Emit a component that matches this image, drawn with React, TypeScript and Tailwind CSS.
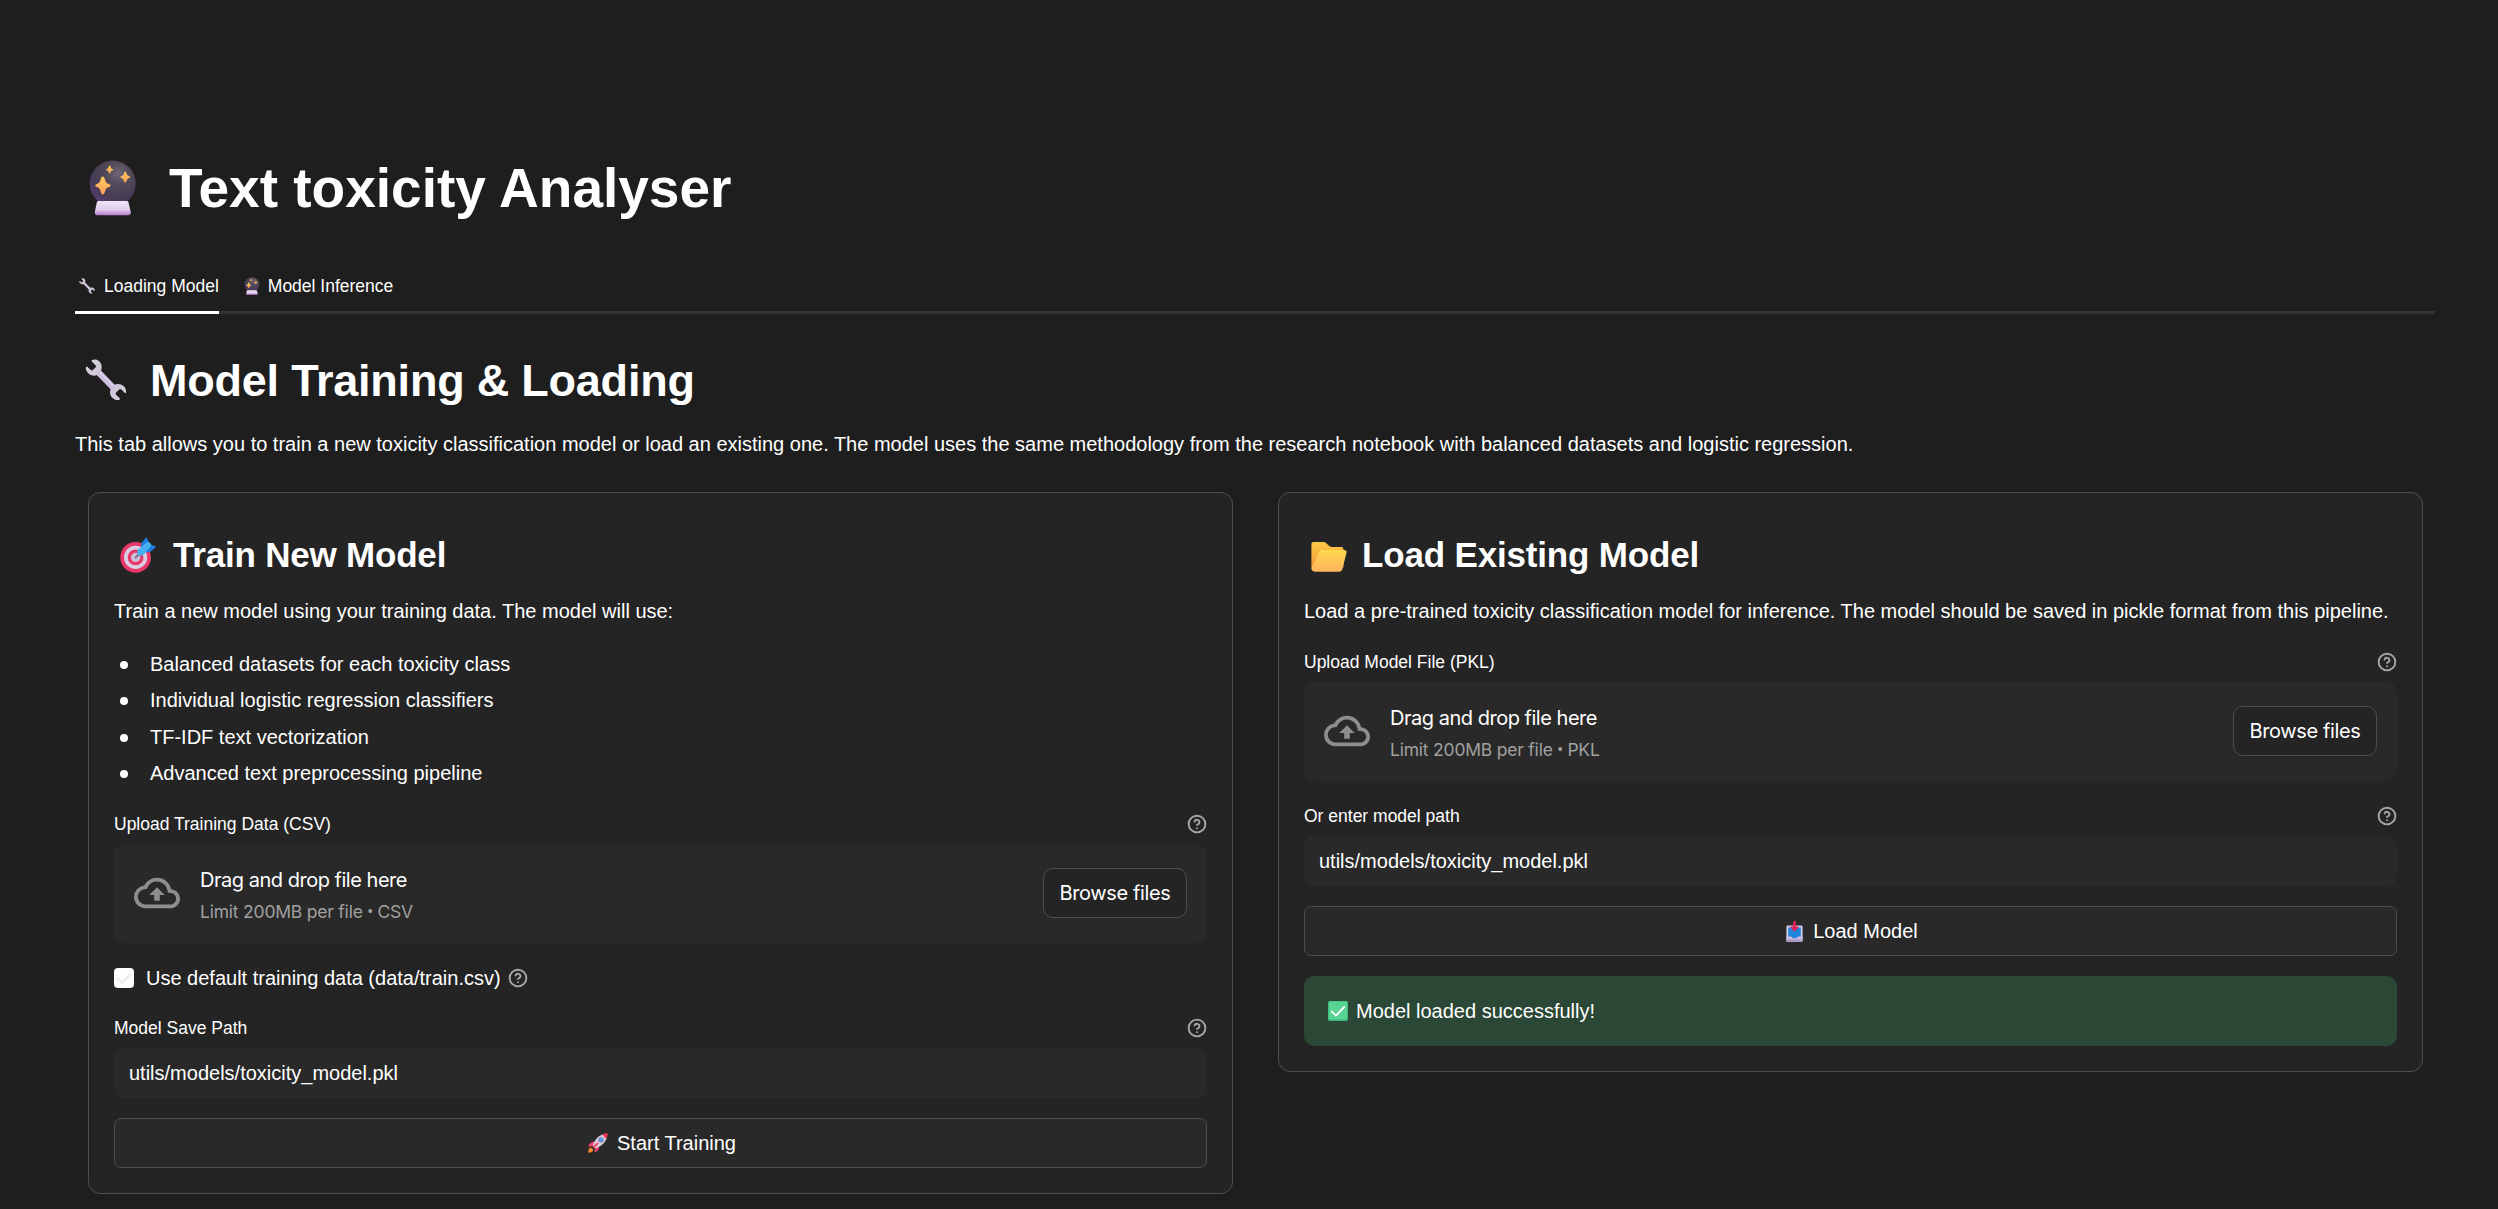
import type { ReactNode } from "react";

type IconProps = { className?: string };

function CrystalBall({ className = "", id }: IconProps & { id: string }) {
  return (
    <svg viewBox="0 0 48 56" className={`shrink-0 ${className}`} aria-hidden="true">
      <defs>
        <radialGradient id={`${id}-ball`} cx="0.62" cy="0.28" r="0.85">
          <stop offset="0" stopColor="#6f6678" />
          <stop offset="0.3" stopColor="#514a58" />
          <stop offset="0.65" stopColor="#463b55" />
          <stop offset="1" stopColor="#5d3a85" />
        </radialGradient>
        <linearGradient id={`${id}-base`} x1="0" y1="0" x2="0" y2="1">
          <stop offset="0" stopColor="#efe6f6" />
          <stop offset="0.6" stopColor="#dfcdec" />
          <stop offset="1" stopColor="#b77bd0" />
        </linearGradient>
        <linearGradient id={`${id}-star`} x1="0" y1="0" x2="0" y2="1">
          <stop offset="0" stopColor="#ffc95c" />
          <stop offset="1" stopColor="#ff9d5c" />
        </linearGradient>
      </defs>
      <circle cx="23.7" cy="23.5" r="23" fill={`url(#${id}-ball)`} />
      <path d="M9.5 41H37.8C38.6 41 39.3 41.6 39.5 42.4L41.8 52C42.2 53.8 41 55.2 39.2 55.2H8.4C6.6 55.2 5.4 53.8 5.8 52L7.8 42.4C8 41.6 8.7 41 9.5 41Z" fill={`url(#${id}-base)`} />
      <g fill={`url(#${id}-star)`}>
        <path d="M13.8 16.5Q15.2 16.5 15.7 18.6C16.6 22.6 17.6 23.4 20.2 24.1Q21.6 24.6 21.6 25.6Q21.6 26.6 20.2 27.1C17.6 27.8 16.6 28.8 15.7 32.6Q15.2 34.6 13.8 34.6Q12.4 34.6 11.9 32.6C11 28.8 10 27.8 7.6 27.1Q6.2 26.6 6.2 25.6Q6.2 24.6 7.6 24.1C10 23.4 11 22.6 11.9 18.6Q12.4 16.5 13.8 16.5Z" />
        <path d="M36.2 11.5Q37 11.5 37.5 13.2C38 15.1 38.5 15.6 40 16Q41.2 16.5 41.2 17.2Q41.2 17.9 40 18.3C38.5 18.7 38 19.3 37.5 21.1Q37 22.8 36.2 22.8Q35.4 22.8 34.9 21.1C34.4 19.3 33.8 18.7 32.5 18.3Q31.3 17.9 31.3 17.2Q31.3 16.5 32.5 16C33.8 15.6 34.4 15.1 34.9 13.2Q35.4 11.5 36.2 11.5Z" />
        <path d="M20.6 5.6Q21.2 5.6 21.6 7C22 8.3 22.3 8.6 23.3 8.9Q24.2 9.2 24.2 9.7Q24.2 10.2 23.3 10.5C22.3 10.8 22 11.1 21.6 12.4Q21.2 13.8 20.6 13.8Q20 13.8 19.6 12.4C19.2 11.1 18.9 10.8 17.9 10.5Q17 10.2 17 9.7Q17 9.2 17.9 8.9C18.9 8.6 19.2 8.3 19.6 7Q20 5.6 20.6 5.6Z" />
      </g>
    </svg>
  );
}

function Wrench({ className = "", id }: IconProps & { id: string }) {
  return (
    <svg viewBox="0 0 42 42" className={`shrink-0 ${className}`} aria-hidden="true">
      <defs>
        <linearGradient id={`${id}-metal`} x1="0" y1="0" x2="1" y2="1">
          <stop offset="0" stopColor="#d9d3df" />
          <stop offset="0.3" stopColor="#cfc8d6" />
          <stop offset="0.5" stopColor="#cdbbe3" />
          <stop offset="0.8" stopColor="#d0c8d9" />
          <stop offset="1" stopColor="#e0dbe5" />
        </linearGradient>
      </defs>
      <path
        d="M7.2 1.1C11.4 -0.6 16 2.1 16.6 6.9C16.8 8.4 16.6 10.2 16 11.6L29.4 25.6C31.6 24.7 34.4 24.7 36.7 25.8C39.8 27.2 41.4 30.2 41.1 33.4C41 34.2 40.3 34.4 39.7 33.8L36.3 30.6C35.6 30 34.7 30 34.1 30.6L31.1 33.6C30.5 34.3 30.5 35.1 31.1 35.7L34.5 39.1C35.1 39.8 34.8 40.7 34 40.9C30.3 41.5 26.6 39.3 25.4 35.7C24.8 33.9 24.9 31.9 25.6 30.2L11.9 16.2C8.8 17.2 5.3 16.5 3 14C1.2 12.1 0.5 9.8 0.9 8.3C1.1 7.5 1.9 7.3 2.5 7.9L5.8 11.1C6.4 11.7 7.3 11.7 7.9 11.1L10.5 8.5C11.1 7.9 11.1 7 10.5 6.3L7 2.7C6.5 2.1 6.5 1.4 7.2 1.1Z"
        fill={`url(#${id}-metal)`}
      />
      <path d="M15.5 13.5L28 26.5" stroke="#e3d6f2" strokeWidth="1.6" strokeLinecap="round" opacity="0.7" />
    </svg>
  );
}

function Target({ className = "" }: IconProps) {
  return (
    <svg viewBox="0 0 36 36" className={`shrink-0 ${className}`} aria-hidden="true">
      <circle cx="15.6" cy="20.4" r="15.3" fill="#e8396a" />
      <circle cx="15.6" cy="20.4" r="11.6" fill="#d9cfe4" />
      <circle cx="15.6" cy="20.4" r="7.9" fill="#e8396a" />
      <circle cx="15.6" cy="20.4" r="4.6" fill="#cdc1da" />
      <path d="M15.6 20.6L20 16" stroke="#7b6f8c" strokeWidth="2" strokeLinecap="round" />
      <path d="M21 9.6L21.6 6.4C21.7 5.7 21.9 5.3 22.4 4.8L25.8 0.9C26.3 0.3 26.9 0.5 27.1 1.2L28.5 5.6L22.3 13.2Z" fill="#1e7fe0" />
      <path d="M23.4 14.2L30.3 7.6L35 9.1C35.7 9.3 35.9 9.9 35.3 10.4L31.4 14C31 14.4 30.6 14.6 30 14.7L27 15.6Z" fill="#1e7fe0" />
      <path d="M18.4 12.6L26.6 5.4C27.4 4.6 28.6 4.6 29.6 5.4L30.6 6.4C31.4 7.3 31.4 8.5 30.6 9.4L23.8 17.4C22.6 18.9 20.2 19.4 18.4 18C16.5 16.5 16.7 14.1 18.4 12.6Z" fill="#45b0f2" />
    </svg>
  );
}

function Folder({ className = "" }: IconProps) {
  return (
    <svg viewBox="0 0 36 35" preserveAspectRatio="none" className={`shrink-0 ${className}`} aria-hidden="true">
      <defs>
        <linearGradient id="folder-back" x1="0" y1="0" x2="0" y2="1">
          <stop offset="0" stopColor="#ffcb45" />
          <stop offset="1" stopColor="#ee9638" />
        </linearGradient>
        <linearGradient id="folder-front" x1="0" y1="0" x2="0" y2="1">
          <stop offset="0" stopColor="#ffd84e" />
          <stop offset="1" stopColor="#ffb45e" />
        </linearGradient>
      </defs>
      <path d="M0.4 2.2C0.4 0.9 1.3 0 2.6 0H11.8C13.3 0 14.4 0.5 15.3 1.5L18.6 5C19.2 5.6 19.9 5.9 20.8 5.9H30.2C31.6 5.9 32.4 6.8 32.4 8.1V30H0.4Z" fill="url(#folder-back)" />
      <path d="M7.9 11.6C8.3 10 9.5 9.3 11 9.3H33C34.9 9.3 36 10.6 35.5 12.4L31.3 31.8C30.9 33.6 29.8 34.6 28 34.6H4.2C1.6 34.6 0 32.7 0.4 30.4C0.5 29.5 0.8 29 1.2 28.2C2.1 26.6 2.5 26.3 3 24.8Z" fill="url(#folder-front)" />
    </svg>
  );
}

function Inbox({ className = "" }: IconProps) {
  return (
    <svg viewBox="0 0 17 21" className={`shrink-0 ${className}`} aria-hidden="true">
      <rect x="0.4" y="4.6" width="16.2" height="16.2" rx="1.4" fill="#d8cbe8" />
      <rect x="2.2" y="6.4" width="12.6" height="9.6" fill="#2285dd" />
      <path d="M0.5 15.4H5.4L6.6 17.2H10.4L11.6 15.4H16.5V19.4C16.5 20.2 16 20.7 15.2 20.7H1.8C1 20.7 0.5 20.2 0.5 19.4Z" fill="#cdbde0" />
      <path d="M5.4 13.6H11.6V15.4L10.4 17.2H6.6L5.4 15.4Z" fill="#2285dd" />
      <path d="M0.6 18.6H16.4V19.4C16.4 20.2 16 20.7 15.2 20.7H1.8C1 20.7 0.6 20.2 0.6 19.4Z" fill="#a996c4" />
      <path d="M7.1 1C7.1 0.4 7.6 0 8.5 0S9.9 0.4 9.9 1V5.6H11.8C12.6 5.6 12.8 6.2 12.3 6.8L9.2 10.1C8.8 10.5 8.2 10.5 7.8 10.1L4.7 6.8C4.2 6.2 4.4 5.6 5.2 5.6H7.1Z" fill="#d9265a" />
    </svg>
  );
}

function CheckMark({ className = "" }: IconProps) {
  return (
    <svg viewBox="0 0 20 20" className={`shrink-0 ${className}`} aria-hidden="true">
      <rect width="20" height="20" rx="1.8" fill="#3fb37f" />
      <rect x="0.8" y="0.6" width="18.4" height="18" rx="1.4" fill="#57d492" />
      <path d="M3.9 10.6L8 14.6L16.2 6" fill="none" stroke="#fff" strokeWidth="1.9" strokeLinecap="round" strokeLinejoin="round" />
    </svg>
  );
}

function Rocket({ className = "" }: IconProps) {
  return (
    <svg viewBox="0 0 20 20" className={`shrink-0 ${className}`} aria-hidden="true">
      <path d="M0.4 19.2C0.2 17.6 0.6 15.8 1.8 15C3.2 14.1 5.4 15.6 5 17.6C4.6 19.2 2.4 19.7 0.8 19.7C0.5 19.7 0.4 19.5 0.4 19.2Z" fill="#f58a2c" />
      <path d="M6.4 8.6C4.2 8.6 1.4 10.4 0.4 13C0.2 13.5 0.6 13.8 1.1 13.7L5.2 13.2L6.8 14.8L6.6 18.9C6.6 19.4 7 19.6 7.4 19.3C10 17.8 11.4 15.6 11.4 13.2Z" fill="#ef4068" />
      <path d="M4.8 12.8C6 7.8 10 2.6 15.8 1L19 4.2C17.4 10 12.2 14 7.2 15.2Z" fill="#d7cbe0" />
      <path d="M14.4 1.6C16 0.7 18 0.2 19.3 0.4C19.6 0.5 19.7 0.6 19.7 0.8C19.8 2.1 19.4 4 18.4 5.6C17 4.8 15.2 3 14.4 1.6Z" fill="#ee3553" />
      <circle cx="13" cy="6.8" r="2.6" fill="#7f6f9c" />
      <circle cx="13" cy="6.8" r="1.9" fill="#4aa5ef" />
      <path d="M6 14L9.6 10.4" stroke="#ef4068" strokeWidth="1.8" strokeLinecap="round" />
    </svg>
  );
}

function CloudUpload({ className = "" }: IconProps) {
  return (
    <svg viewBox="0 0 24 24" fill="currentColor" className={`shrink-0 ${className}`} aria-hidden="true">
      <path d="M19.35 10.04A7.49 7.49 0 0 0 12 4C9.11 4 6.6 5.64 5.35 8.04A5.994 5.994 0 0 0 0 14c0 3.31 2.69 6 6 6h13c2.76 0 5-2.24 5-5 0-2.64-2.05-4.78-4.65-4.96zM19 18H6c-2.21 0-4-1.79-4-4 0-2.05 1.53-3.76 3.56-3.97l1.07-.11.5-.95A5.469 5.469 0 0 1 12 6c2.62 0 4.88 1.86 5.39 4.43l.3 1.5 1.53.11A2.98 2.98 0 0 1 22 15c0 1.65-1.35 3-3 3zM8 13h2.55v3h2.9v-3H16l-4-4z" />
    </svg>
  );
}

function Help() {
  return (
    <svg viewBox="0 0 24 24" fill="none" stroke="#a6a6a6" strokeWidth="2.3" strokeLinecap="round" strokeLinejoin="round" className="size-5 shrink-0" aria-hidden="true">
      <circle cx="12" cy="12" r="10" />
      <path d="M9.09 9a3 3 0 0 1 5.83 1c0 2-3 3-3 3" />
      <path d="M12 17h.01" />
    </svg>
  );
}

function FieldLabel({ children }: { children: ReactNode }) {
  return (
    <div className="mb-[5px] flex h-[30px] items-center justify-between text-[17.5px]">
      <span>{children}</span>
      <Help />
    </div>
  );
}

function Uploader({ label, kind }: { label: string; kind: string }) {
  return (
    <div>
      <FieldLabel>{label}</FieldLabel>
      <div className="flex h-[99px] items-center rounded-[10px] bg-[#292929] px-5 font-['Inter',sans-serif]">
        <CloudUpload className="mb-px size-[46px] text-[#8e8e8e]" />
        <div className="ml-5 flex flex-col pt-1 leading-8">
          <span className="text-[20px] tracking-[-0.024em]">Drag and drop file here</span>
          <span className="text-[17.5px] tracking-[-0.012em] text-[#a0a0a0]">
            Limit 200MB per file
            <span className="mx-[4.5px] font-['Roboto',sans-serif]">•</span>
            {kind}
          </span>
        </div>
        <button className="mb-px ml-auto h-[50px] w-36 rounded-[10px] border border-[#4e4e4e] bg-[#242424] text-[20px] tracking-[-0.018em]">
          Browse files
        </button>
      </div>
    </div>
  );
}

function PathField({ label }: { label: string }) {
  return (
    <div>
      <FieldLabel>{label}</FieldLabel>
      <div className="flex h-[50px] items-center rounded-[10px] bg-[#292929] px-[15px] text-[20px]">
        utils/models/toxicity_model.pkl
      </div>
    </div>
  );
}

function WideButton({ children }: { children: ReactNode }) {
  return (
    <button className="flex h-[50px] w-full items-center justify-center rounded-[7px] border border-[#4e4e4e] bg-[#292929] pl-[3px] text-[20px]">
      {children}
    </button>
  );
}

function Card({ children }: { children: ReactNode }) {
  return (
    <section className="flex flex-1 flex-col gap-5 rounded-xl border border-[#4e4e4e] bg-[#242424] p-[25px]">
      {children}
    </section>
  );
}

const features = [
  "Balanced datasets for each toxicity class",
  "Individual logistic regression classifiers",
  "TF-IDF text vectorization",
  "Advanced text preprocessing pipeline",
];

export default function App() {
  return (
    <div className="h-[1209px] overflow-hidden bg-[#1e1e1e] pt-[155px] pr-[63px] pl-[75px] font-['Liberation_Sans',sans-serif] text-[20px] leading-8 text-white">
      <h1 className="flex h-[66px] items-center pl-[14px] text-[55px] leading-[66px] font-bold">
        <CrystalBall id="title" className="mr-8 h-14 w-12" />
        Text toxicity Analyser
      </h1>

      <nav className="mt-[43px] flex gap-[25px] border-b-[3px] border-[#333333] text-[17.5px]">
        <div className="-mb-[3px] flex h-[50px] items-center border-b-[3px] border-white pb-[3px] pl-1">
          <Wrench id="tab" className="mr-[9px] size-4" />
          Loading Model
        </div>
        <div className="flex h-[47px] items-center pb-[3px]">
          <CrystalBall id="tab-ball" className="mr-2 h-[18px] w-4" />
          Model Inference
        </div>
      </nav>

      <h2 className="mt-10 flex h-[54px] items-center pl-2.5 text-[45px] leading-[54px] font-bold tracking-[-0.22px]">
        <Wrench id="heading" className="mr-[23px] mb-0.5 size-[42px]" />
        Model Training &amp; Loading
      </h2>
      <p className="mt-5">
        This tab allows you to train a new toxicity classification model or load an existing one. The model uses the
        same methodology from the research notebook with balanced datasets and logistic regression.
      </p>

      <div className="mt-8 mr-3 ml-[13px] flex items-start gap-[45px]">
        <Card>
          <div className="h-[271px]">
            <h3 className="mt-4 flex h-[42px] items-center pl-1.5 text-[35px] leading-[42px] font-bold tracking-[-0.2px]">
              <Target className="mr-[17px] size-9" />
              Train New Model
            </h3>
            <p className="mt-[19px]">Train a new model using your training data. The model will use:</p>
            <ul className="mt-[18.6px]">
              {features.map((feature) => (
                <li key={feature} className="flex h-[36.4px] items-center">
                  <span className="mt-0.5 mr-[22px] ml-1.5 size-2 rounded-full bg-white" />
                  {feature}
                </li>
              ))}
            </ul>
          </div>
          <Uploader label="Upload Training Data (CSV)" kind="CSV" />
          <div className="flex h-[30px] items-center">
            <span className="mr-3 flex size-5 items-center justify-center rounded-[4px] bg-white">
              <svg viewBox="0 0 20 20" fill="none" stroke="#eceef2" strokeWidth="2.8" className="size-5" aria-hidden="true">
                <path d="M2.8 9.8L7.8 14.6L17.2 5.4" />
              </svg>
            </span>
            <span className="mr-[7px]">Use default training data (data/train.csv)</span>
            <Help />
          </div>
          <PathField label="Model Save Path" />
          <WideButton>
            <Rocket className="mr-[9px] size-5" />
            Start Training
          </WideButton>
        </Card>

        <Card>
          <div className="h-[109px]">
            <h3 className="mt-4 flex h-[42px] items-center pl-[7px] text-[35px] leading-[42px] font-bold tracking-[-0.17px]">
              <Folder className="mt-1 mr-[15px] h-[30px] w-9" />
              Load Existing Model
            </h3>
            <p className="mt-[19px]">
              Load a pre-trained toxicity classification model for inference. The model should be saved in pickle format
              from this pipeline.
            </p>
          </div>
          <Uploader label="Upload Model File (PKL)" kind="PKL" />
          <PathField label="Or enter model path" />
          <WideButton>
            <Inbox className="mr-[10px] h-[21px] w-[17px]" />
            Load Model
          </WideButton>
          <div className="flex h-[70px] items-center rounded-[10px] bg-[#2b4735] pl-6">
            <CheckMark className="mr-2 size-5" />
            Model loaded successfully!
          </div>
        </Card>
      </div>
    </div>
  );
}
